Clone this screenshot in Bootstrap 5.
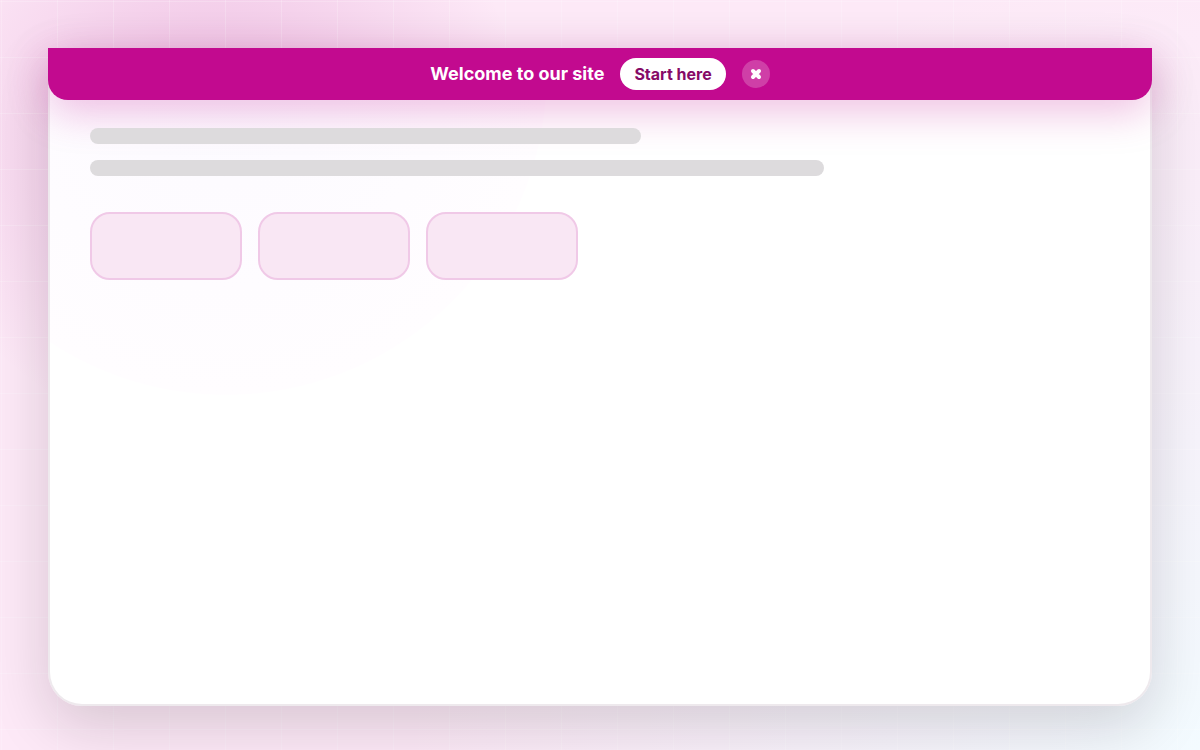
<!DOCTYPE html>
<html lang="en">
<head>
<meta charset="utf-8">
<meta name="viewport" content="width=device-width, initial-scale=1">
<title>Welcome</title>
<link href="https://cdn.jsdelivr.net/npm/bootstrap@5.3.0/dist/css/bootstrap.min.css" rel="stylesheet">
<style>
  body {
    font-family: Inter, "Liberation Sans", sans-serif;
    background:
      radial-gradient(circle at 18% 18%, rgba(178, 20, 143, .2), rgba(178, 20, 143, 0) 310px),
      radial-gradient(circle at 100% 100%, #f3fbff, rgba(243, 247, 255, 0) 800px),
      #fde9f7;
  }
  /* faint white grid over the backdrop */
  .backdrop {
    padding: 48px 48px 44px;
    background-image:
      linear-gradient(90deg, transparent 1px, rgba(255, 255, 255, .2) 1px, rgba(255, 255, 255, .2) 2px, transparent 2px),
      linear-gradient(transparent 1px, rgba(255, 255, 255, .2) 1px, rgba(255, 255, 255, .2) 2px, transparent 2px);
    background-size: 56px 56px;
  }
  .site-frame {
    border-radius: 0 0 34px 34px;
    border: 2px solid #eee9ed;
    border-top: 0;
    background: radial-gradient(circle at 16% 4%, #fcfaff, #fffdff 320px, #fff 321px);
    box-shadow: 0 20px 60px rgba(20, 10, 20, .16);
  }
  .welcome-bar {
    min-height: 52px;
    margin: 0 -2px;
    border-radius: 0 0 20px 20px;
    background: #c20a8f;
    box-shadow: 0 12px 40px rgba(194, 10, 143, .26);
    font-size: 18px;
    line-height: 24px;
  }
  .btn-start {
    --bs-btn-color: #860a67;
    --bs-btn-bg: #fff;
    --bs-btn-hover-color: #860a67;
    --bs-btn-hover-bg: #fdeaf7;
    --bs-btn-border-width: 0px;
    --bs-btn-padding-x: 14px;
    --bs-btn-padding-y: 4px;
    --bs-btn-font-size: 16px;
    --bs-btn-line-height: 24px;
  }
  .btn-dismiss {
    width: 28px;
    height: 28px;
    background: rgba(255, 255, 255, .22);
  }
  .page-body { padding: 28px 40px 40px; }
  .text-line { height: 16px; background: #dddbdd; }
  .line-short { width: 54%; }
  .line-long { width: 72%; }
  .tile-row { margin-top: 20px; }
  .tile {
    width: 152px;
    height: 68px;
    border: 2px solid #f0c9e7;
    border-radius: 20px;
    background: #f9e7f4;
  }
</style>
</head>
<body>
<div class="backdrop min-vh-100 d-flex flex-column">
  <div class="site-frame flex-grow-1">
    <header class="welcome-bar d-flex flex-wrap justify-content-center align-items-center gap-3 text-white fw-bold">
      <span>Welcome to our site</span>
      <button type="button" class="btn btn-start rounded-pill fw-bold">Start here</button>
      <button type="button" class="btn-dismiss border-0 rounded-circle p-0 d-flex align-items-center justify-content-center" aria-label="Close">
        <svg width="12" height="12" viewBox="0 0 12 12" fill="none" stroke="#fff" stroke-width="4" stroke-linecap="round" aria-hidden="true"><path d="M3 3 9 9M9 3 3 9"/></svg>
      </button>
    </header>
    <main class="page-body d-flex flex-column gap-3">
      <div class="text-line line-short rounded-3"></div>
      <div class="text-line line-long rounded-3"></div>
      <div class="tile-row d-flex flex-wrap gap-3">
        <div class="tile"></div>
        <div class="tile"></div>
        <div class="tile"></div>
      </div>
    </main>
  </div>
</div>
<script src="https://cdn.jsdelivr.net/npm/bootstrap@5.3.0/dist/js/bootstrap.bundle.min.js"></script>
</body>
</html>
